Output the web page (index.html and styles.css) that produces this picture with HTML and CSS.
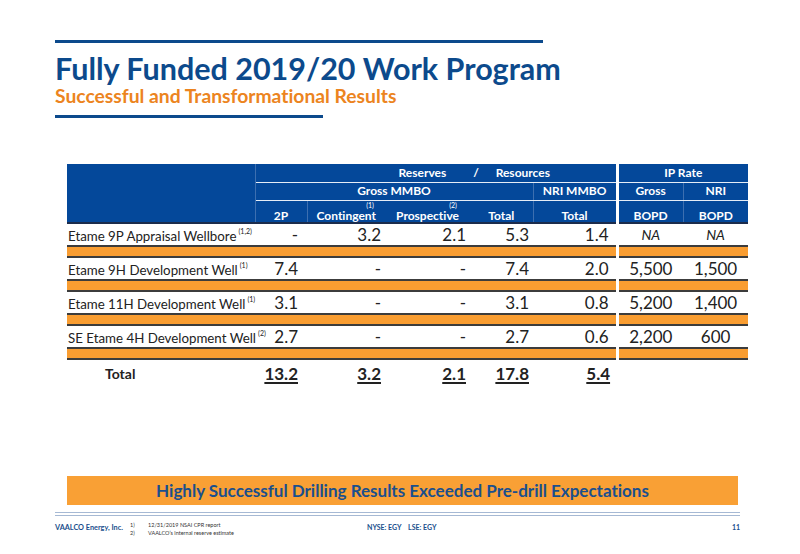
FILE: index.html
```html
<!DOCTYPE html>
<html lang="en">
<head>
  <meta charset="UTF-8">
  <title>Fully Funded 2019/20 Work Program</title>
  <link rel="stylesheet" href="styles.css">
</head>
<body>
<div class="slide">
  <header class="head">
    <div class="rule rule-top"></div>
    <h1>Fully Funded 2019/20 Work Program</h1>
    <h2>Successful and Transformational Results</h2>
    <div class="rule rule-bottom"></div>
  </header>

  <table class="results">
    <colgroup>
      <col class="c-label">
      <col class="c-2p">
      <col class="c-cont">
      <col class="c-prosp">
      <col class="c-total">
      <col class="c-nri">
      <col class="c-gross">
      <col class="c-ipnri">
    </colgroup>
    <thead>
      <tr class="h1row">
        <th class="blank" rowspan="3"></th>
        <th colspan="5" class="resv">Reserves <span class="slash">/</span> Resources</th>
        <th colspan="2" class="ip">IP Rate</th>
      </tr>
      <tr class="h2row">
        <th colspan="4">Gross MMBO</th>
        <th class="vl">NRI MMBO</th>
        <th class="ip">Gross</th>
        <th class="vl">NRI</th>
      </tr>
      <tr class="h3row">
        <th>2P</th>
        <th class="vl"><span class="fn">Contingent<sup>(1)</sup></span></th>
        <th><span class="fn">Prospective<sup>(2)</sup></span></th>
        <th>Total</th>
        <th class="vl">Total</th>
        <th class="ip">BOPD</th>
        <th class="vl">BOPD</th>
      </tr>
    </thead>
    <tbody>
      <tr class="well">
        <td class="label">Etame 9P Appraisal Wellbore<sup>(1,2)</sup></td>
        <td class="num p2">-</td>
        <td class="num">3.2</td>
        <td class="num">2.1</td>
        <td class="num">5.3</td>
        <td class="num nri">1.4</td>
        <td class="ipv ip na">NA</td>
        <td class="ipv na">NA</td>
      </tr>
      <tr class="band"><td></td><td></td><td></td><td></td><td></td><td></td><td class="ip"></td><td></td></tr>
      <tr class="well">
        <td class="label">Etame 9H Development Well<sup>(1)</sup></td>
        <td class="num p2">7.4</td>
        <td class="num dash">-</td>
        <td class="num dash">-</td>
        <td class="num">7.4</td>
        <td class="num nri">2.0</td>
        <td class="ipv ip">5,500</td>
        <td class="ipv">1,500</td>
      </tr>
      <tr class="band"><td></td><td></td><td></td><td></td><td></td><td></td><td class="ip"></td><td></td></tr>
      <tr class="well">
        <td class="label">Etame 11H Development Well<sup>(1)</sup></td>
        <td class="num p2">3.1</td>
        <td class="num dash">-</td>
        <td class="num dash">-</td>
        <td class="num">3.1</td>
        <td class="num nri">0.8</td>
        <td class="ipv ip">5,200</td>
        <td class="ipv">1,400</td>
      </tr>
      <tr class="band"><td></td><td></td><td></td><td></td><td></td><td></td><td class="ip"></td><td></td></tr>
      <tr class="well">
        <td class="label">SE Etame 4H Development Well<sup>(2)</sup></td>
        <td class="num p2">2.7</td>
        <td class="num dash">-</td>
        <td class="num dash">-</td>
        <td class="num">2.7</td>
        <td class="num nri">0.6</td>
        <td class="ipv ip">2,200</td>
        <td class="ipv">600</td>
      </tr>
      <tr class="band"><td></td><td></td><td></td><td></td><td></td><td></td><td class="ip"></td><td></td></tr>
      <tr class="total">
        <td class="label">Total</td>
        <td class="num p2"><u>13.2</u></td>
        <td class="num"><u>3.2</u></td>
        <td class="num"><u>2.1</u></td>
        <td class="num"><u>17.8</u></td>
        <td class="num nri"><u>5.4</u></td>
        <td></td>
        <td></td>
      </tr>
    </tbody>
  </table>

  <div class="banner">Highly Successful Drilling Results Exceeded Pre-drill Expectations</div>

  <footer class="foot">
    <div class="foot-rules"></div>
    <div class="foot-row">
      <span class="company">VAALCO Energy, Inc.</span>
      <ol class="notes">
        <li><span>1)</span>12/31/2019 NSAI CPR report</li>
        <li><span>2)</span>VAALCO’s internal reserve estimate</li>
      </ol>
      <span class="ticker">NYSE: EGY&nbsp;&nbsp;&nbsp;&nbsp;LSE: EGY</span>
      <span class="page">11</span>
    </div>
  </footer>
</div>
</body>
</html>
```

FILE: styles.css
```css
body {
  margin: 0;
  background: #fff;
  font-family: Lato, 'Open Sans', sans-serif;
  font-variant-ligatures: none;
  color: #222;
}
.slide {
  width: 800px;
  height: 554px;
  overflow: hidden;
  display: flex;
  flex-direction: column;
}
.head {
  padding: 40px 0 0 55px;
}
.rule {
  height: 3px;
  background: #0c4a8c;
}
.rule-top {
  width: 488px;
}
.rule-bottom {
  width: 268px;
  margin-top: 9px;
}
h1 {
  margin: 7px 0 0;
  font-size: 30.5px;
  line-height: 36px;
  font-weight: 700;
  color: #0c4a8c;
}
h2 {
  margin: 0;
  font-size: 19.3px;
  line-height: 20px;
  font-weight: 700;
  color: #ec8420;
}

/* table */
.results {
  margin: 46px 0 0 67px;
  width: 681px;
  table-layout: fixed;
  border-collapse: collapse;
}
.c-label { width: 188px; }
.c-2p { width: 52px; }
.c-cont { width: 78px; }
.c-prosp { width: 85px; }
.c-total { width: 63px; }
.c-nri { width: 84px; }
.c-gross { width: 66px; }
.c-ipnri { width: 65px; }

.results th {
  background: #04489a;
  color: #fff;
  font-size: 12px;
  font-weight: 700;
  padding: 0;
  line-height: 1;
  text-align: center;
}
.results th.blank {
  border-right: 1px solid #3d6fb0;
  border-bottom: 2px solid #1c2c4c;
}
.h1row th,
.h2row th {
  border-bottom: 1px solid #e6edf7;
}
.h1row { height: 18px; }
.h2row { height: 18px; }
.h3row { height: 23px; }
.h3row th {
  vertical-align: bottom;
  padding-bottom: 0;
  border-bottom: 2px solid #1c2c4c;
}
.results th.resv {
  text-align: left;
  padding-left: 143px;
}
.slash {
  margin: 0 14px 0 24px;
}
.results .ip {
  border-left: 3px solid #fff;
}
.results th.vl,
.results td.vl {
  border-left: 1px solid #3d6fb0;
}
.fn {
  position: relative;
}
.fn sup {
  position: absolute;
  right: 2px;
  top: -6px;
  font-size: 7px;
  font-weight: 400;
}

.well td {
  height: 19px;
  padding: 0;
  background: #fff;
}
.band td {
  height: 9px;
  padding: 0;
  background: #f99d31;
  border-top: 2px solid #3c3c3c;
  border-bottom: 2px solid #3c3c3c;
}
.band td.ip {
  border-left: 3px solid #fff;
}
.results .label {
  font-size: 13.3px;
  padding-left: 1px;
  white-space: nowrap;
  vertical-align: bottom;
  padding-bottom: 1px;
}
.label sup {
  font-size: 7px;
  vertical-align: 7px;
  margin-left: 2px;
}
.num {
  font-size: 17px;
  text-align: right;
  padding-right: 4px !important;
}
.num.p2 {
  padding-right: 9px !important;
}
.num.nri {
  padding-right: 7px !important;
}
.ipv {
  font-size: 17px;
  text-align: center;
}
.ipv.na {
  font-size: 14px;
  font-style: italic;
}

.total td {
  height: 26px;
  padding: 0;
  font-weight: 700;
  vertical-align: middle;
}
.results .total .label {
  padding-left: 38px;
  font-size: 14px;
  vertical-align: middle;
}
.total u {
  text-decoration-thickness: 2px;
  text-underline-offset: 2px;
}

/* banner */
.banner {
  margin: 89px 0 0 67px;
  width: 671px;
  height: 29px;
  line-height: 29px;
  background: #f9a035;
  color: #1a4f8d;
  font-size: 17px;
  font-weight: 700;
  text-align: center;
}

/* footer */
.foot {
  padding: 7px 60px 0 55px;
}
.foot-rules {
  height: 2px;
  border-top: 1px solid #a6b9d4;
  border-bottom: 1px solid #a6b9d4;
}
.foot-row {
  display: flex;
  align-items: flex-start;
  margin-top: 5px;
}
.company {
  font-size: 7.3px;
  font-weight: 700;
  color: #1a4f8d;
  width: 75px;
  padding-top: 2px;
}
.notes {
  list-style: none;
  margin: 0;
  padding: 0;
  width: 237px;
  font-size: 5.5px;
  line-height: 8px;
  color: #333;
}
.notes span {
  display: inline-block;
  width: 18px;
}
.ticker {
  font-size: 7px;
  font-weight: 700;
  color: #1a4f8d;
  padding-top: 2px;
  flex: 1;
}
.page {
  font-size: 7px;
  font-weight: 700;
  color: #1a4f8d;
  padding-top: 2px;
}
```
